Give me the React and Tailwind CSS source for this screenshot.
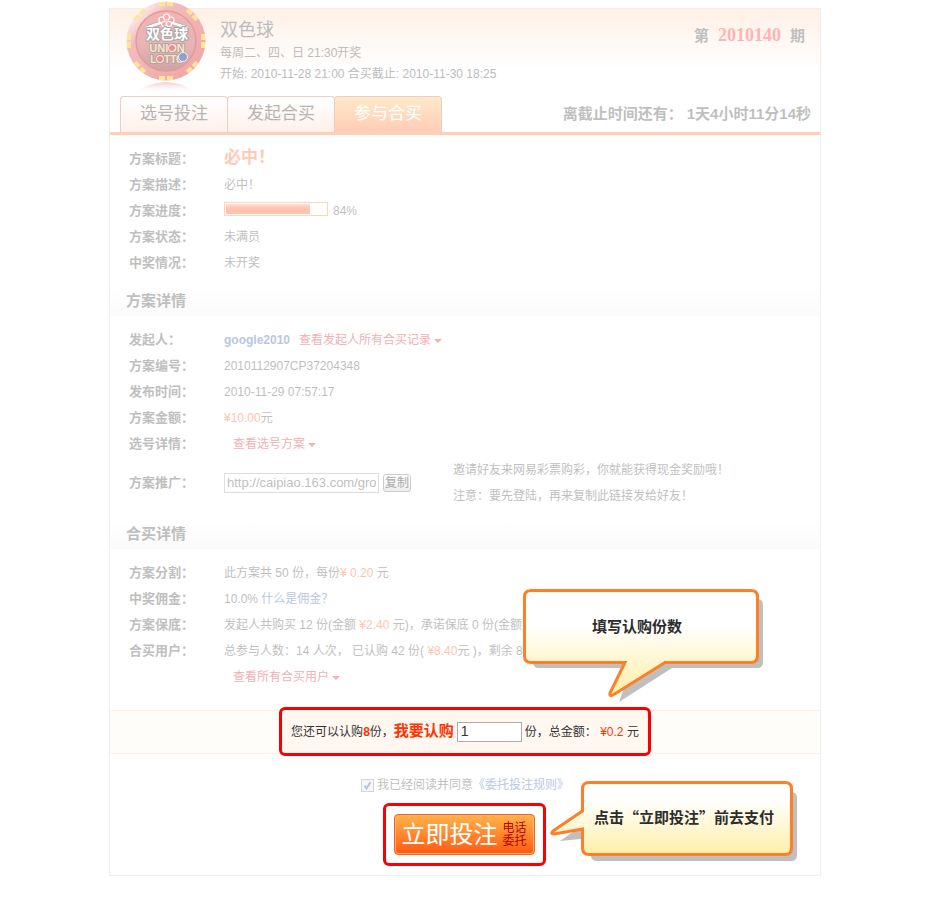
import clsx from "clsx";

const TABS = ["选号投注", "发起合买", "参与合买"];

function Caret() {
  return (
    <svg className="inline-block align-middle ml-[3px]" width="8" height="4" viewBox="0 0 8 4" aria-hidden="true">
      <path d="M0 0h8L4 4z" fill="#f4b3ad" />
    </svg>
  );
}

function MoreLink({ children, className }) {
  return (
    <a href="#more" className={clsx("ml-[9px] text-[#f2b0b3]", className)}>
      {children}
      <Caret />
    </a>
  );
}

function Row({ label, children }) {
  return (
    <div className="flex items-center">
      <dt className="w-[95px] shrink-0 text-[13px] font-bold">{label}</dt>
      <dd className="min-h-[26px] whitespace-nowrap">{children}</dd>
    </div>
  );
}

function SectionTitle({ children }) {
  return (
    <h2 className="mx-px h-[29px] pl-[15px] text-[15px] leading-[28px] font-bold bg-linear-to-b from-white to-[#fafafa]">
      {children}
    </h2>
  );
}

function LottoLogo() {
  const marks = [0, 45, 90, 135, 180, 225, 270, 315];
  return (
    <svg className="-mt-[9px] shrink-0" width="80" height="94" viewBox="0 0 80 94" role="img" aria-label="双色球">
      <defs>
        <linearGradient id="rim" x1="0.1" y1="0.1" x2="0.9" y2="0.9">
          <stop offset="0" stopColor="#fffafa" />
          <stop offset="0.25" stopColor="#f3bcbc" />
          <stop offset="1" stopColor="#f1a5a6" />
        </linearGradient>
        <linearGradient id="face" x1="0" y1="0" x2="0" y2="1">
          <stop offset="0" stopColor="#f0b5b5" />
          <stop offset="0.6" stopColor="#e6b3b3" />
          <stop offset="1" stopColor="#cfa3a4" />
        </linearGradient>
        <linearGradient id="mirror" x1="0" y1="0" x2="0" y2="1">
          <stop offset="0" stopColor="#e9b9ba" stopOpacity="0.7" />
          <stop offset="1" stopColor="#ffffff" stopOpacity="0" />
        </linearGradient>
      </defs>
      <path d="M10 93Q20 83 40 82Q60 83 70 93z" fill="url(#mirror)" />
      <circle cx="40" cy="41" r="39.5" fill="url(#rim)" />
      {marks.map((deg) => (
        <g key={deg} transform={`rotate(${deg} 40 41)`} fill="#fbe69a">
          <rect x="33" y="2" width="6" height="4" />
          <rect x="41" y="2" width="6" height="4" />
        </g>
      ))}
      <circle cx="40" cy="41" r="30" fill="url(#face)" stroke="#e29a9c" strokeWidth="1.5" />
      <path d="M20 28Q31 24 40 21Q50 24 62 28" fill="none" stroke="#b8aaac" strokeWidth="4" />
      <path d="M20 28Q31 24 40 21Q50 24 62 28" fill="none" stroke="#ffffff" strokeWidth="2.5" />
      <g fill="#f1a9a9" stroke="#ffffff" strokeWidth="1.2">
        <circle cx="36" cy="20" r="3" />
        <circle cx="45" cy="20" r="3" />
        <circle cx="40.5" cy="17" r="3" />
        <circle cx="38" cy="24" r="2.5" />
        <circle cx="43" cy="24" r="2.5" />
      </g>
      <circle cx="40.5" cy="20.5" r="2" fill="#f6caca" />
      <g
        textAnchor="middle"
        className="font-['Liberation_Sans','Noto_Sans_CJK_SC',sans-serif] font-bold"
        paintOrder="stroke"
        strokeLinejoin="round"
      >
        <text x="41" y="39" fontSize="14" fill="#ffffff" stroke="#aaa4a6" strokeWidth="2">双色球</text>
        <text x="41" y="52" fontSize="11" fill="#f8e6c6" stroke="#b3a3a3" strokeWidth="2">UNION</text>
        <text x="41" y="63" fontSize="10" fill="#f8e6c6" stroke="#b3a3a3" strokeWidth="2">LOTTO</text>
      </g>
      <circle cx="46" cy="48" r="3.5" fill="#ee8d8d" stroke="#fff" strokeWidth="0.8" />
      <circle cx="34" cy="59" r="3.5" fill="#ee8d8d" stroke="#fff" strokeWidth="0.8" />
      <circle cx="57" cy="57" r="4.5" fill="#93a0cf" stroke="#fff" strokeWidth="0.8" />
    </svg>
  );
}

function AmountCallout() {
  return (
    <div className="absolute right-[57px] bottom-[calc(100%+8px)] w-[240px] h-[114px]">
      <svg className="absolute inset-0" width="240" height="114" viewBox="0 0 240 114" aria-hidden="true">
        <defs>
          <linearGradient id="amountFill" gradientUnits="userSpaceOnUse" x1="0" y1="35" x2="0" y2="106">
            <stop offset="0" stopColor="#ffffff" />
            <stop offset="0.5" stopColor="#fff7d2" />
            <stop offset="1" stopColor="#ffeea8" />
          </linearGradient>
        </defs>
        <path d="M16 10H234Q240 10 240 16V73Q240 79 234 79H149L96 113L108 79H16Q10 79 10 73z" fill="#bfbfbf" />
        <path
          d="M7 1.5H228Q234.500 1.5 234.500 8V67Q234.500 73.500 228 73.500H142L90 106Q86 108 87 104L102 73.500H8Q1.500 73.500 1.500 67V8Q1.500 1.500 8 1.500z"
          fill="url(#amountFill)"
          stroke="#ff7f27"
          strokeWidth="3"
        />
      </svg>
      <p className="relative pr-3 text-center text-[15px] leading-[76px] font-bold text-[#2d2d2d]">填写认购份数</p>
    </div>
  );
}

function PayCallout() {
  return (
    <div className="absolute right-[23px] top-[27px] w-[247px] h-[80px]">
      <svg className="absolute inset-0" width="247" height="80" viewBox="0 0 247 80" aria-hidden="true">
        <defs>
          <linearGradient id="payFill" gradientUnits="userSpaceOnUse" x1="0" y1="18" x2="0" y2="74">
            <stop offset="0" stopColor="#ffffff" />
            <stop offset="1" stopColor="#ffeea8" />
          </linearGradient>
        </defs>
        <path d="M41 11H241Q247 11 247 17V74Q247 80 241 80H47Q41 80 41 74V57L10 60L41 38z" fill="#bfbfbf" />
        <path
          d="M39 1.500H235Q241.500 1.500 241.500 8V67Q241.500 73.500 235 73.500H39Q32.500 73.500 32.500 67V48L4 53Q0 53 3 50L32.500 30V8Q32.500 1.500 39 1.500z"
          fill="url(#payFill)"
          stroke="#ff7f27"
          strokeWidth="3"
        />
      </svg>
      <p className="relative pl-11 text-[15px] leading-[72px] font-bold whitespace-nowrap text-[#2d2d2d] font-['Noto_Sans_CJK_SC',sans-serif]">
        点击“立即投注”前去支付
      </p>
    </div>
  );
}

function Header() {
  return (
    <header className="border-b-[3px] border-[#ffceb3] bg-linear-to-b from-[#fff0e6] to-white to-50%">
      <div className="flex items-start h-[87px] pl-4 pr-[15px]">
        <LottoLogo />
        <div className="ml-[14px] pt-[9px] text-[#bcbcbc]">
          <h1 className="text-[18px] leading-[25px]">双色球</h1>
          <p className="leading-[21px]">每周二、四、日 21:30开奖</p>
          <p className="leading-[21px]">开始: 2010-11-28 21:00 合买截止: 2010-11-30 18:25</p>
        </div>
        <p className="ml-auto pt-[13px] text-[15px] leading-[26px] font-bold whitespace-nowrap">
          第
          <span className="mx-[9px] text-[18px] text-[#ffb3b3] font-['Liberation_Serif',serif]">2010140</span>
          期
        </p>
      </div>
      <div className="flex items-center h-9 pl-[10px] pr-[9px]">
        <nav className="flex h-full">
          {TABS.map((tab, i) => (
            <a
              key={tab}
              href="#tab"
              className={clsx(
                "w-[108px] h-full -mr-px rounded-t-[4px] border border-b-0 border-[#e8cfc8] text-center text-[17px] leading-[34px] bg-linear-to-b",
                i === 2 ? "from-[#ffe9c8] to-[#ffccb5] text-white" : "from-white to-[#fff0ea] text-[#b5b5b5]"
              )}
            >
              {tab}
            </a>
          ))}
        </nav>
        <p className="ml-auto text-[15px] font-bold whitespace-nowrap">
          离截止时间还有：<span className="ml-1">1天4小时11分14秒</span>
        </p>
      </div>
    </header>
  );
}

export default function App() {
  return (
    <div className="min-h-screen bg-white pt-2 pb-11 text-[12px] text-[#bfbfbf] font-['Liberation_Sans','Noto_Sans_CJK_SC',sans-serif]">
      <main className="mx-auto max-w-[712px] border border-[#eeeeee]" lang="zh-CN">
        <Header />

        <dl className="pt-[10px] pb-[11px] pl-[19px] leading-[26px]">
          <Row label="方案标题：">
            <span className="text-[17px] font-bold text-[#ffcbb8]">必中！</span>
          </Row>
          <Row label="方案描述：">必中！</Row>
          <Row label="方案进度：">
            <div className="flex items-center gap-[5px]">
              <div className="mb-1 w-[104px] h-[14px] border border-[#ffd6bb] p-px" role="progressbar" aria-valuenow={84} aria-label="方案进度">
                <div className="h-full bg-linear-to-b from-[#ffddd2] to-[#ffc1b0] to-50%" style={{ width: "84%" }} />
              </div>
              84%
            </div>
          </Row>
          <Row label="方案状态：">未满员</Row>
          <Row label="中奖情况：">未开奖</Row>
        </dl>

        <SectionTitle>方案详情</SectionTitle>
        <dl className="pt-[11px] pb-[11px] pl-[19px] leading-[26px]">
          <Row label="发起人：">
            <a href="#user" className="font-bold text-[#b8c8e2]">google2010</a>
            <MoreLink>查看发起人所有合买记录</MoreLink>
          </Row>
          <Row label="方案编号：">2010112907CP37204348</Row>
          <Row label="发布时间：">2010-11-29 07:57:17</Row>
          <Row label="方案金额：">
            <span className="text-[#ffc4b0]">¥10.00</span>元
          </Row>
          <Row label="选号详情：">
            <MoreLink>查看选号方案</MoreLink>
          </Row>
          <Row label="方案推广：">
            <div className="flex items-center">
              <input
                type="text"
                aria-label="推广链接"
                defaultValue="http://caipiao.163.com/gro"
                className="w-[155px] h-5 border border-[#dedede] px-[2px] text-[13px]"
              />
              <button type="button" className="ml-1 w-[28px] h-[18px] rounded-[3px] border border-[#cccccc] bg-linear-to-b from-white to-[#eeeeee] text-[12px] leading-4 text-[#a8a8a8]">
                复制
              </button>
              <div className="ml-[42px]">
                <p>邀请好友来网易彩票购彩，你就能获得现金奖励哦！</p>
                <p>注意：要先登陆，再来复制此链接发给好友！</p>
              </div>
            </div>
          </Row>
        </dl>

        <SectionTitle>合买详情</SectionTitle>
        <dl className="pt-[11px] pb-5 pl-[19px] leading-[26px]">
          <Row label="方案分割：">
            此方案共 50 份，每份<span className="text-[#ffc4b0]">¥ 0.20</span> 元
          </Row>
          <Row label="中奖佣金：">
            10.0% <a href="#fee" className="text-[#b8c8e2]">什么是佣金？</a>
          </Row>
          <Row label="方案保底：">
            发起人共购买 12 份(金额 <span className="text-[#ffc4b0]">¥2.40</span> 元)，承诺保底 0 份(金额
          </Row>
          <Row label="合买用户：">
            总参与人数：14 人次， 已认购 42 份( <span className="text-[#ffc4b0]">¥8.40</span>元 )，剩余 8
          </Row>
          <Row label="">
            <MoreLink>查看所有合买用户</MoreLink>
          </Row>
        </dl>

        <form onSubmit={(e) => e.preventDefault()}>
          <div className="relative flex justify-center h-11 border-y border-[#fff0e6] bg-[#fffdf9]">
            <div className="-mt-1 -mb-[3px] flex items-center rounded-[6px] border-[3px] border-[#fa0000] bg-[#fff7f0] px-[9px] whitespace-nowrap text-[#333333]">
              <span>
                您还可以认购<b className="text-[#ff3300]">8</b>份，
              </span>
              <label htmlFor="shares" className="text-[15px] font-bold text-[#ff3300]">我要认购</label>
              <input
                id="shares"
                type="text"
                defaultValue="1"
                className="mx-[3px] w-[65px] h-5 border border-[#abadb3] bg-white px-[3px] text-[14px]"
              />
              <span>
                份，总金额： <span className="text-[#ff3300]">¥0.2</span> 元
              </span>
            </div>
            <AmountCallout />
          </div>

          <div className="relative flex flex-col items-center pt-[21px] pb-[9px]">
            <div className="flex items-center h-5">
              <span className="relative flex mr-[3px]">
                <input
                  id="agree"
                  type="checkbox"
                  defaultChecked
                  className="peer size-[13px] appearance-none border border-[#d2d6da] bg-[#f6f6f6]"
                />
                <svg className="absolute inset-0 hidden peer-checked:block pointer-events-none" width="13" height="13" viewBox="0 0 13 13" fill="none" aria-hidden="true">
                  <path d="M3.500 6.500L5.500 9.500L9.500 3" stroke="#b9c3dc" strokeWidth="2" />
                </svg>
              </span>
              <label htmlFor="agree">我已经阅读并同意</label>
              <a href="#rules" className="text-[#b8c8e2]">《委托投注规则》</a>
            </div>
            <div className="mt-2 mr-[2px] rounded-[6px] border-[3px] border-[#fa0000] px-2 py-[8px]">
              <button
                type="submit"
                className="flex items-center justify-center gap-[5px] w-[141px] h-[41px] rounded-[4px] border border-[#f2641c] bg-linear-to-b from-[#ffb24a] to-[#ff5509] inset-ring inset-ring-[#ffb27a] whitespace-nowrap"
              >
                <span className="text-[24px] leading-[38px] text-white">立即投注</span>
                <span className="w-6 text-[12px] leading-[13px] whitespace-normal text-[#b30000]">电话委托</span>
              </button>
            </div>
            <PayCallout />
          </div>
        </form>
      </main>
    </div>
  );
}
